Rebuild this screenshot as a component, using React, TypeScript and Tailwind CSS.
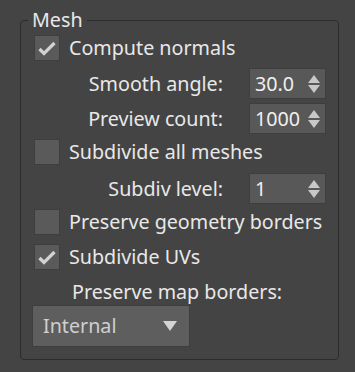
import React from 'react';

const font = { fontFamily: '"Noto Sans", "Open Sans", sans-serif' };

const Check = () => (
  <svg width="20" height="17" viewBox="0 0 20 17">
    <path d="M2.5 9 L7 13.5 L17.5 3" fill="none" stroke="#d2d2d2" strokeWidth="3.2" />
  </svg>
);

const CheckRow = ({ label, checked, className = '' }: { label: string; checked?: boolean; className?: string }) => (
  <div className={`flex items-center h-[26px] ${className}`}>
    <div className="w-[26px] h-[26px] bg-[#5a5a5a] border border-[#3e3e3e] flex items-center justify-center">
      {checked && <Check />}
    </div>
    <span className="ml-[9px] text-[19.7px] text-[#e8e8e8] leading-none">{label}</span>
  </div>
);

const Arrows = () => (
  <svg width="14" height="20" viewBox="0 0 14 20">
    <polygon points="7,1 13,9 1,9" fill="#c8c8c8" />
    <polygon points="1,11 13,11 7,19" fill="#c8c8c8" />
  </svg>
);

const SpinRow = ({ label, value, className = '' }: { label: string; value: string; className?: string }) => (
  <div className={`flex items-center h-[31px] ${className}`}>
    <span className="w-[189px] text-right text-[19.7px] text-[#e8e8e8] leading-none whitespace-nowrap">{label}</span>
    <div className="ml-[26px] w-[77px] h-[31px] bg-[#585858] border border-[#3e3e3e] flex items-center pl-[5px] pr-[4px]">
      <span className="flex-1 text-[19.7px] text-[#f0f0f0] leading-none">{value}</span>
      <Arrows />
    </div>
  </div>
);

export default function App() {
  return (
    <div className="w-[355px] h-[372px] bg-[#444444] pt-[20px] pl-[20px]" style={font}>
      <div className="relative w-[319px] h-[340px] border border-[#2c2c2c] rounded-[4px] pl-[13px]">
        <span className="absolute left-[7px] top-[-13px] px-[4px] bg-[#444444] text-[19.7px] text-[#e8e8e8] leading-[24px]">Mesh</span>
        <CheckRow label="Compute normals" checked className="mt-[14px]" />
        <SpinRow label="Smooth angle:" value="30.0" className="mt-[7px]" />
        <SpinRow label="Preview count:" value="1000" className="mt-[4px]" />
        <CheckRow label="Subdivide all meshes" className="mt-[5px]" />
        <SpinRow label="Subdiv level:" value="1" className="mt-[8px]" />
        <CheckRow label="Preserve geometry borders" className="mt-[5px]" />
        <CheckRow label="Subdivide UVs" checked className="mt-[9px]" />
        <div className="mt-[10px] h-[24px] flex items-center pl-[38px] text-[19.7px] text-[#e8e8e8] leading-none whitespace-nowrap">
          Preserve map borders:
        </div>
        <div className="mt-[1px] -ml-[2px] w-[158px] h-[42px] bg-[#5e5e5e] border border-[#3e3e3e] flex items-center pl-[10px] pr-[12px]">
          <span className="flex-1 text-[19.7px] text-[#cfcfcf] leading-none">Internal</span>
          <svg width="14" height="11" viewBox="0 0 14 11">
            <polygon points="0,0 14,0 7,10" fill="#d4d4d4" />
          </svg>
        </div>
      </div>
    </div>
  );
}
